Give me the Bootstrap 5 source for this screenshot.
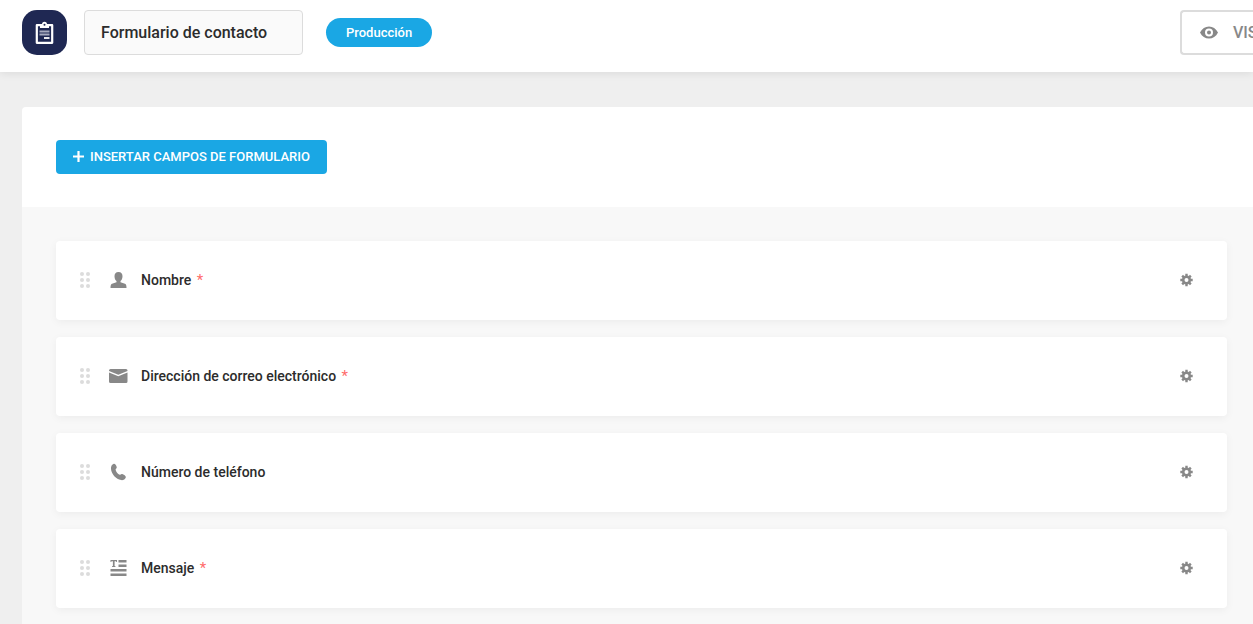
<!DOCTYPE html>
<html lang="es">
<head>
<meta charset="utf-8">
<meta name="viewport" content="width=device-width, initial-scale=1">
<title>Formulario de contacto</title>
<link href="https://cdn.jsdelivr.net/npm/bootstrap@5.3.0/dist/css/bootstrap.min.css" rel="stylesheet">
<style>
  body { font-family: Roboto, "Liberation Sans", sans-serif; background: #efefef; color: #2c2c2c; overflow-x: hidden; }
  .topbar { padding: 10px 0 17px 22px; box-shadow: 0 2px 8px rgba(0,0,0,.08); }
  .app-logo { width: 45px; height: 45px; border-radius: 15px; background: #1f2853; margin-right: 17px; }
  .form-name { width: 219px; height: 45px; padding: 0 16px; background: #fafafa; border-color: #dcdcdc; border-radius: 4px; font-size: 16px; font-weight: 500; color: #2c2c2c; margin-right: 23px; }
  .status-pill { background: #1aa7e4; height: 29px; padding: 0 20px; font-size: 13px; font-weight: 500; }
  .preview-btn { width: 73px; height: 45px; padding: 0 0 0 17px; border: 2px solid #dcdcdc; border-right: 0; border-radius: 4px 0 0 4px; color: #888; font-size: 16px; font-weight: 500; gap: 14px; }
  .builder { margin: 35px 0 0 22px; border-radius: 4px 0 0 0; }
  .builder-tools { padding: 33px 34px; }
  .insert-btn { height: 34px; padding: 0 17px; gap: 6px; border: 0; border-radius: 4px; background: #1aa7e4; color: #fff; font-size: 13px; font-weight: 500; }
  .field-list { background: #f8f8f8; padding: 34px 26px 17px 34px; gap: 17px; }
  .field-row { min-height: 79px; padding: 0 34px 2px 24px; border-radius: 4px; box-shadow: 0 2px 8px rgba(0,0,0,.05); }
  .field-label { font-size: 14px; line-height: 20px; font-weight: 500; margin-left: 13px; }
  .required { color: #ff6b6b; font-size: 15px; font-weight: 400; line-height: 1; margin-left: 2px; }
  .drag { margin-right: 18px; cursor: grab; }
  .icon-btn { border: 0; background: none; padding: 0; color: #888; }
  .field-icon { color: #888; }
</style>
</head>
<body>
<header class="topbar bg-white d-flex align-items-center position-relative">
  <div class="app-logo d-flex align-items-center justify-content-center flex-shrink-0">
    <svg width="20" height="24" viewBox="0 0 20 24" fill="none">
      <path d="M1.800 4.200H17.200V21.800H1.800Z" stroke="#fff" stroke-width="2.200" stroke-linejoin="round"/>
      <path d="M5 3.200H7A2.500 2.500 0 0 1 12 3.200H14V7H5Z" fill="#fff"/>
      <circle cx="9.500" cy="3.800" r="1" fill="#1f2853"/>
      <path d="M4.500 10.500H14.500M4.500 13.500H14.500" stroke="#a5a9bd" stroke-width="1.800"/>
      <path d="M9 17H14.500" stroke="#fff" stroke-width="1.800"/>
    </svg>
  </div>
  <input class="form-control form-name flex-shrink-0" type="text" value="Formulario de contacto" aria-label="Nombre del formulario">
  <span class="status-pill rounded-pill text-white d-flex align-items-center">Producción</span>
  <button type="button" class="preview-btn bg-white d-flex align-items-center ms-auto overflow-hidden text-nowrap flex-shrink-0">
    <svg class="flex-shrink-0" width="20" height="14" viewBox="0 0 20 14"><path fill="currentColor" fill-rule="evenodd" d="M1 6.500C3 2.500 6.200 .5 10 .5S17 2.500 19 6.500C17 10.500 13.800 12.500 10 12.500S3 10.500 1 6.500ZM10 2.500A4 4 0 1 0 10 10.500 4 4 0 0 0 10 2.500ZM10 4.500A2 2 0 1 1 10 8.500 2 2 0 0 1 10 4.500Z"/></svg>
    <span>VISTA PREVIA</span>
  </button>
</header>

<main class="builder bg-white">
  <div class="builder-tools">
    <button type="button" class="insert-btn d-inline-flex align-items-center align-top">
      <svg width="11" height="12" viewBox="0 0 11 12"><path d="M5.500 0V11M0 5.500H11" stroke="#fff" stroke-width="2.200"/></svg>
      <span>INSERTAR CAMPOS DE FORMULARIO</span>
    </button>
  </div>

  <div class="field-list d-flex flex-column">
    <div class="field-row bg-white d-flex align-items-center">
      <svg class="drag" width="10" height="18" viewBox="0 0 10 18"><use href="#grip"/></svg>
      <svg class="field-icon" width="20" height="18" viewBox="0 0 20 18"><path fill="currentColor" d="M10.500 1C13.300 1 14.500 2.800 14.500 5.200 14.500 7.500 13.700 9 12.500 10V11.200L17 12.700C18.200 13.300 18.500 14.500 18.500 17H2.500C2.500 14.500 2.800 13.300 4 12.700L8.500 11.200V10C7.300 9 6.500 7.500 6.500 5.200 6.500 2.800 7.700 1 10.500 1Z"/></svg>
      <span class="field-label">Nombre <span class="required">*</span></span>
      <button type="button" class="icon-btn ms-auto d-flex" aria-label="Configurar Nombre"><svg width="13" height="14" viewBox="0 0 13 14"><use href="#gear"/></svg></button>
    </div>
    <div class="field-row bg-white d-flex align-items-center">
      <svg class="drag" width="10" height="18" viewBox="0 0 10 18"><use href="#grip"/></svg>
      <svg class="field-icon" width="20" height="18" viewBox="0 0 20 18"><path fill="currentColor" d="M2.500 2H18Q19.500 2 19.500 3.500V4L10.300 7.700 1 4V3.500Q1 2 2.500 2ZM1 5.500L10.300 9.300 19.500 5.500V14.500Q19.500 16 18 16H2.500Q1 16 1 14.500Z"/></svg>
      <span class="field-label">Dirección de correo electrónico <span class="required">*</span></span>
      <button type="button" class="icon-btn ms-auto d-flex" aria-label="Configurar Dirección de correo electrónico"><svg width="13" height="14" viewBox="0 0 13 14"><use href="#gear"/></svg></button>
    </div>
    <div class="field-row bg-white d-flex align-items-center">
      <svg class="drag" width="10" height="18" viewBox="0 0 10 18"><use href="#grip"/></svg>
      <svg class="field-icon" width="20" height="18" viewBox="0 0 20 18"><path fill="currentColor" d="M5.800 .8C7.100 .6 8.200 2.200 8.700 3.900 9.100 5.400 7.500 5.500 7.600 6.700 8 8.800 9.700 10.800 11.700 11.700 12.900 12.100 13.400 10.800 14.700 11.200 16.200 11.800 18.200 13 17.800 14.500 17.300 16.300 15.100 17.400 13.100 17.100 8 16.300 3.500 11.200 3 6 2.700 3.500 4 1.200 5.800 .8Z"/></svg>
      <span class="field-label">Número de teléfono</span>
      <button type="button" class="icon-btn ms-auto d-flex" aria-label="Configurar Número de teléfono"><svg width="13" height="14" viewBox="0 0 13 14"><use href="#gear"/></svg></button>
    </div>
    <div class="field-row bg-white d-flex align-items-center">
      <svg class="drag" width="10" height="18" viewBox="0 0 10 18"><use href="#grip"/></svg>
      <svg class="field-icon" width="20" height="18" viewBox="0 0 20 18"><path fill="currentColor" d="M10.500 1H18.500V3.500H10.500ZM10.500 5.500H18.500V8H10.500ZM2.500 10H18.500V12.500H2.500ZM2.500 14.500H18.500V17H2.500ZM2.500 1H9V3H8.300L8 2.200H6.600V7L7.500 7.300V8H4V7.300L4.900 7V2.200H3.500L3.200 3H2.500Z"/></svg>
      <span class="field-label">Mensaje <span class="required">*</span></span>
      <button type="button" class="icon-btn ms-auto d-flex" aria-label="Configurar Mensaje"><svg width="13" height="14" viewBox="0 0 13 14"><use href="#gear"/></svg></button>
    </div>
  </div>
</main>

<svg width="0" height="0" class="position-absolute" aria-hidden="true">
  <defs>
    <g id="grip" fill="#dcdcdc"><circle cx="2" cy="3" r="2"/><circle cx="8" cy="3" r="2"/><circle cx="2" cy="9" r="2"/><circle cx="8" cy="9" r="2"/><circle cx="2" cy="15" r="2"/><circle cx="8" cy="15" r="2"/></g>
    <g id="gear" stroke="currentColor" fill="none"><circle cx="6.500" cy="7" r="3.300" stroke-width="2.600"/><path d="M6.500 .8V3M6.500 11V13.200M.3 7H2.500M10.500 7H12.700M2.200 2.700L3.800 4.300M9.200 9.700L10.800 11.300M10.800 2.700L9.200 4.300M3.800 9.700L2.200 11.300" stroke-width="2.400"/></g>
  </defs>
</svg>
<script src="https://cdn.jsdelivr.net/npm/bootstrap@5.3.0/dist/js/bootstrap.bundle.min.js"></script>
</body>
</html>
